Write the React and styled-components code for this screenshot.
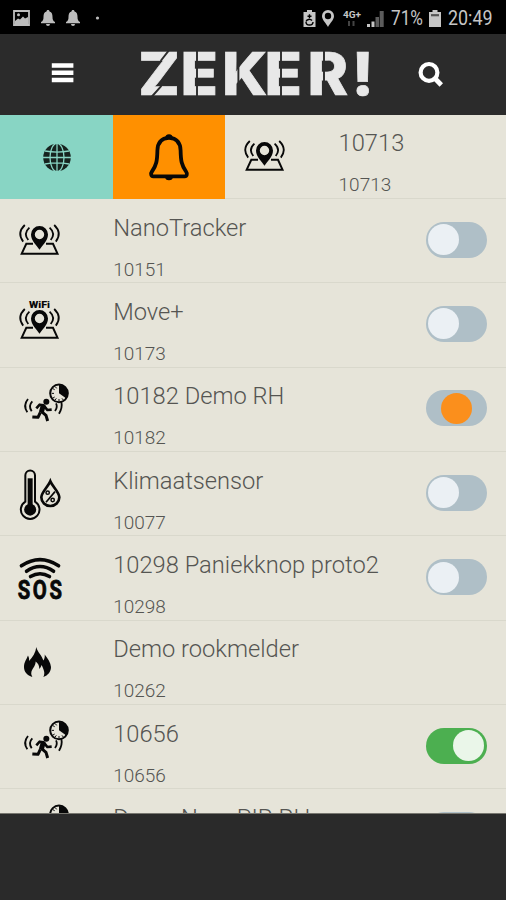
import React from "react";
import styled, { createGlobalStyle } from "styled-components";

const Global = createGlobalStyle`
  * { box-sizing: border-box; }
  html, body { margin: 0; padding: 0; background: #2a2a2a; }
`;

const Screen = styled.div`
  display: flex;
  flex-direction: column;
  width: 506px;
  height: 900px;
  overflow: hidden;
  background: #2a2a2a;
  font-family: Roboto, "Noto Sans", sans-serif;
`;

const StatusBar = styled.div`
  display: flex;
  flex: none;
  align-items: center;
  justify-content: space-between;
  height: 34px;
  padding: 2px 14px 0 13px;
  background: #000;
`;

const StatusGroup = styled.div`
  display: flex;
  align-items: center;
  gap: ${(p) => p.$gap}px;
`;

const Glyph = styled.svg`
  display: block;
  flex: none;
  overflow: visible;
`;

const Header = styled.header`
  display: flex;
  flex: none;
  align-items: flex-start;
  height: 80.5px;
  background: #2b2b2b;
`;

const IconButton = styled.button`
  flex: none;
  display: block;
  padding: 0;
  border: 0;
  background: none;
  margin: ${(p) => p.$margin};
`;

const List = styled.main`
  flex: none;
  height: 699px;
  overflow: hidden;
  background: #e6e4d9;
  border-bottom: 1px solid #77766f;
`;

const Row = styled.div`
  display: flex;
  height: 84.35px;
  border-bottom: 1px solid #d9d8cc;
`;

const Action = styled.button`
  flex: none;
  width: ${(p) => p.$width}px;
  height: 84.35px;
  border: 0;
  padding: 0;
  background: ${(p) => p.$color};
`;

const IconCell = styled.div`
  flex: none;
  width: 113.2px;
`;

const Info = styled.div`
  flex: 1;
  min-width: 0;
  padding-top: 14.75px;
  color: #555552;
  font-weight: 300;
  white-space: nowrap;
`;

const Title = styled.div`
  font-size: 23.7px;
  line-height: 28px;
`;

const Code = styled.div`
  margin-top: 17px;
  font-size: 19px;
  line-height: 22px;
`;

const Track = styled.div`
  flex: none;
  display: flex;
  align-items: center;
  width: 61px;
  height: 36px;
  margin: 22.8px 19.5px 0 0;
  padding: 0 2.5px;
  border-radius: 18px;
  justify-content: ${(p) => ({ off: "flex-start", mid: "center", on: "flex-end" })[p.$state]};
  background: ${(p) => (p.$state === "on" ? "#4caf50" : "#afbfc7")};
`;

const Knob = styled.div`
  width: 31px;
  height: 31px;
  border-radius: 50%;
  background: ${(p) => ({ off: "#ebf0f4", mid: "#fb8f1c", on: "#eaf6e9" })[p.$state]};
`;

const TrackerIcon = ({ wifi }) => (
  <Glyph width="80" height="83" viewBox="0 0 80 83" fill="none" stroke="#080808">
    {wifi && (
      <text x="29" y="25" textLength="21" lengthAdjust="spacingAndGlyphs" fontFamily="Roboto" fontWeight="900" fontSize="9.8" fill="#080808" stroke="none">WiFi</text>
    )}
    <path d="M33 44.8H26.3L21.7 54.7H57.5L53 44.8H46" strokeWidth="2" />
    <path d="M39.5 50.8C37 46.5 31 41.5 31 35.4a8.5 8.5 0 0 1 17 0C48 41.5 42 46.5 39.5 50.8ZM39.5 40.2a4.7 4.7 0 1 0 0-9.4a4.7 4.7 0 0 0 0 9.4Z" fill="#080808" fillRule="evenodd" stroke="none" />
    <path d="M24.8 26Q16.5 34 23.2 42.6M29.4 28.6Q23 34.5 28.3 41M54.2 26Q62.5 34 55.8 42.6M49.6 28.6Q56 34.5 50.7 41" strokeWidth="1.8" />
  </Glyph>
);

const RunnerIcon = () => (
  <Glyph width="80" height="83" viewBox="0 0 80 83">
    <g transform="translate(0 -2.3) scale(.33333)" fill="none" stroke="#080808">
      <circle cx="177" cy="83" r="26.5" strokeWidth="6" />
      <path d="M177 83V58A25 25 0 0 1 198 98Z" fill="#080808" stroke="none" />
      <path d="M155 83h7M159 97l5-3M165 103l4-5M177 107v-7M190 103l-4-5M159 69l5 3M166 63l4 5" strokeWidth="3" />
      <circle cx="139" cy="108" r="9" fill="#080808" stroke="none" />
      <path d="M109 128L119 117L131 119L142 133L155 132" strokeWidth="8" strokeLinejoin="round" />
      <path d="M130 118L124 140" strokeWidth="15" />
      <path d="M124 137L138 149L143 166M121 140L114 155L97 154" strokeWidth="9" strokeLinejoin="round" />
      <path d="M84 100Q68 119 82 140M97 107Q84 120 95 137M184 108Q188 126 177 144M168 113Q174 124 165 136" strokeWidth="5.5" />
    </g>
  </Glyph>
);

const ClimateIcon = () => (
  <Glyph width="80" height="83" viewBox="0 0 80 83">
    <g transform="translate(0 -86.7) scale(.33333)" fill="none" stroke="#080808">
      <path d="M76 409V330a14.5 14.5 0 0 1 29 0V409A28 28 0 1 1 76 409Z" strokeWidth="6" />
      <circle cx="90.5" cy="433" r="18" fill="#080808" stroke="none" />
      <path d="M90.5 433V339" strokeWidth="15" />
      <path d="M151 348C145 363 124 381 124 396a27 26 0 0 0 54 0C178 381 157 363 151 348Z" strokeWidth="8" />
      <path d="M165 379L138 411" strokeWidth="5" />
      <circle cx="143" cy="382" r="5" strokeWidth="4.5" />
      <circle cx="158" cy="404" r="5" strokeWidth="4.5" />
    </g>
  </Glyph>
);

const SosIcon = () => (
  <Glyph width="80" height="83" viewBox="0 0 80 83">
    <path d="M21.4 29.8Q40 17.4 58.6 29.8M26.5 35.3Q40 25.8 53.6 35.3M30.5 40.6Q40 34.8 49.5 40.6" fill="none" stroke="#080808" strokeWidth="3.5" strokeLinecap="round" />
    <text transform="translate(17.7 63) scale(.78 1)" fontFamily="Roboto" fontWeight="700" fontSize="26" letterSpacing="3.4" fill="#080808" stroke="#080808" strokeWidth=".8" strokeLinejoin="round">SOS</text>
  </Glyph>
);

const FireIcon = () => (
  <Glyph width="80" height="83" viewBox="0 0 80 83">
    <g transform="translate(0 -85.4) scale(.33333)">
      <path d="M109 334C112 350 126 358 130 375C134 370 135 363 134 357C143 369 152 381 153 394C153 408 144 419 130 424C137 411 130 400 125 388C123 393 121 397 118 400C118 390 114 383 107 378C107 393 95 400 94 411C93 416 95 420 97 424C82 419 72 409 72 394C72 380 80 371 84 360C87 366 88 371 87 376C98 365 107 351 109 334Z" fill="#080808" />
    </g>
  </Glyph>
);

const GlobeIcon = () => (
  <Glyph width="113" height="84" viewBox="0 0 113 84">
    <circle cx="57" cy="42.5" r="13.8" fill="#17231f" />
    <g fill="none" stroke="#88d5c4" strokeWidth="1.3">
      <path d="M43 42.5H71M45 36Q57 38.3 69 36M45 49Q57 46.7 69 49M57 28.5V56.5" />
      <ellipse cx="57" cy="42.5" rx="7" ry="14.2" />
    </g>
  </Glyph>
);

const BellIcon = () => (
  <Glyph width="112" height="84" viewBox="0 0 112 84">
    <path d="M56 22.8C48 22.8 44.5 28.5 44.4 35.5C44.2 45.5 43.5 50.5 38.7 57C37.6 58.5 38 61.3 40.3 61.3H71.7C74 61.3 74.4 58.5 73.3 57C68.5 50.5 67.8 45.5 67.6 35.5C67.5 28.5 64 22.8 56 22.8Z" fill="none" stroke="#080808" strokeWidth="3.8" strokeLinejoin="round" />
    <path d="M52.2 23a3.8 3.8 0 0 1 7.6 0ZM52.2 62h7.6a3.8 3.2 0 0 1-7.6 0Z" fill="#080808" />
  </Glyph>
);

const Logo = () => (
  <Glyph width="232" height="80" viewBox="139 34 232 80">
    <text transform="translate(0 95) scale(1.04 1)" y="0" x="132.9 173.5 213.5 254.4 295.6 338.2" fontFamily="Inter" fontWeight="800" fontSize="59" fill="#e8e8e8" stroke="#e8e8e8" strokeWidth=".7">ZEKER!</text>
    <path d="M168.7 50.6L160.6 61M161.4 85.8L151.5 97M197 50V97M238.4 50V97M281 50V97M324 50V97" stroke="#2b2b2b" strokeWidth="1.9" />
  </Glyph>
);

const StatusBell = () => (
  <Glyph width="14" height="16" viewBox="0 0 14 16" fill="#bdbdbd">
    <path d="M7 0C8 0 8.5 .7 8.5 1.5C11 2.3 11.5 4.5 11.5 7C11.5 9.5 12 11 14 12V13.3H0V12C2 11 2.5 9.5 2.5 7C2.5 4.5 3 2.3 5.5 1.5C5.5 .7 6 0 7 0ZM5 14h4a2 2 0 0 1-4 0Z" />
  </Glyph>
);

const StatusText = ({ width, children }) => (
  <Glyph width={width} height="20" viewBox={`0 0 ${width} 20`}>
    <text x="0" y="16.8" textLength={width} lengthAdjust="spacingAndGlyphs" fontFamily="Roboto" fontSize="20" fill="#c6c6c6">{children}</text>
  </Glyph>
);

const ICONS = {
  tracker: <TrackerIcon />,
  wifi: <TrackerIcon wifi />,
  runner: <RunnerIcon />,
  climate: <ClimateIcon />,
  sos: <SosIcon />,
  fire: <FireIcon />,
};

const DEVICES = [
  { icon: "tracker", name: "NanoTracker", code: "10151", state: "off" },
  { icon: "wifi", name: "Move+", code: "10173", state: "off" },
  { icon: "runner", name: "10182 Demo RH", code: "10182", state: "mid" },
  { icon: "climate", name: "Klimaatsensor", code: "10077", state: "off" },
  { icon: "sos", name: "10298 Paniekknop proto2", code: "10298", state: "off" },
  { icon: "fire", name: "Demo rookmelder", code: "10262" },
  { icon: "runner", name: "10656", code: "10656", state: "on" },
  { icon: "runner", name: "Demo NanoPIR RH", state: "mid" },
];

const DeviceRow = ({ icon, name, code, state }) => (
  <Row>
    <IconCell>{ICONS[icon]}</IconCell>
    <Info>
      <Title>{name}</Title>
      {code && <Code>{code}</Code>}
    </Info>
    {state && (
      <Track $state={state}>
        <Knob $state={state} />
      </Track>
    )}
  </Row>
);

export default function App() {
  return (
    <Screen>
      <Global />
      <StatusBar>
        <StatusGroup $gap={11}>
          <Glyph width="17" height="16" viewBox="0 0 17 16">
            <path d="M1 1H16V15H1Z" fill="none" stroke="#bdbdbd" strokeWidth="1.8" />
            <path d="M2 11L5 8.5L7 9.5L10 6.5L12 8.5L15 7V14H2Z" fill="#bdbdbd" />
            <circle cx="5.5" cy="4.7" r="1.5" fill="#bdbdbd" />
          </Glyph>
          <StatusBell />
          <StatusBell />
          <Glyph width="12" height="4" viewBox="0 0 12 4"><circle cx="6.5" cy="2" r="1.6" fill="#bdbdbd" /></Glyph>
        </StatusGroup>
        <StatusGroup $gap={6.5}>
          <Glyph width="13" height="17" viewBox="0 0 13 17">
            <path d="M4 0H9V2H12.5V17H.5V2H4Z" fill="#c6c6c6" />
            <path d="M6.5 4.3V8.3M4.5 6.3H8.5M3 12a3.5 3 0 0 0 7 0M3 11.5a3.5 3 0 0 1 6 -1" fill="none" stroke="#000" strokeWidth="1.4" />
          </Glyph>
          <Glyph width="12" height="17" viewBox="0 0 12 17">
            <path d="M6 17C4 13 0 10 0 6A6 6 0 0 1 12 6C12 10 8 13 6 17ZM6 9.2A3.2 3.2 0 1 0 6 2.8A3.2 3.2 0 0 0 6 9.2Z" fill="#c6c6c6" fillRule="evenodd" />
          </Glyph>
          <Glyph width="20" height="17" viewBox="0 0 20 17">
            <text x="2" y="7.8" textLength="18" lengthAdjust="spacingAndGlyphs" fontFamily="Roboto" fontWeight="700" fontSize="9.5" fill="#c6c6c6">4G+</text>
            <path d="M8 11V16M12.5 11V16" stroke="#444" strokeWidth="2" />
          </Glyph>
          <Glyph width="17" height="17" viewBox="0 0 17 17">
            <path d="M0 14h3v3H0ZM4.5 11.5h3V17h-3Z" fill="#c6c6c6" />
            <path d="M8.5 7h3.5v10H8.5ZM12.7 1h4v16h-4Z" fill="#5c5c5c" />
          </Glyph>
          <StatusText width={32}>71%</StatusText>
          <Glyph width="12" height="17" viewBox="0 0 12 17">
            <path d="M3.5 0h5v2H12V17H0V2h3.5Z" fill="#c6c6c6" />
            <path d="M2 5.2H10" stroke="#555" strokeWidth="2.2" />
          </Glyph>
          <StatusText width={44.5}>20:49</StatusText>
        </StatusGroup>
      </StatusBar>
      <Header>
        <IconButton $margin="29.3px 65px 0 51px" aria-label="Menu">
          <Glyph width="23" height="20" viewBox="0 0 23 20">
            <path d="M.8 2.4H22.4M.8 9.7H22.4M.8 17H22.4" stroke="#fff" strokeWidth="4.5" />
          </Glyph>
        </IconButton>
        <Logo />
        <IconButton $margin="27px 0 0 47px" aria-label="Zoeken">
          <Glyph width="26" height="26" viewBox="0 0 26 26" fill="none" stroke="#fff">
            <circle cx="11" cy="11.4" r="8.4" strokeWidth="4.2" />
            <path d="M17 17.5L23.3 24" strokeWidth="4.8" />
          </Glyph>
        </IconButton>
      </Header>
      <List>
        <Row>
          <Action $width={113} $color="#88d5c4" aria-label="Kaart"><GlobeIcon /></Action>
          <Action $width={112.4} $color="#ff9000" aria-label="Alarm"><BellIcon /></Action>
          <IconCell><TrackerIcon /></IconCell>
          <Info>
            <Title>10713</Title>
            <Code>10713</Code>
          </Info>
        </Row>
        {DEVICES.map((d, i) => (
          <DeviceRow key={i} {...d} />
        ))}
      </List>
    </Screen>
  );
}
